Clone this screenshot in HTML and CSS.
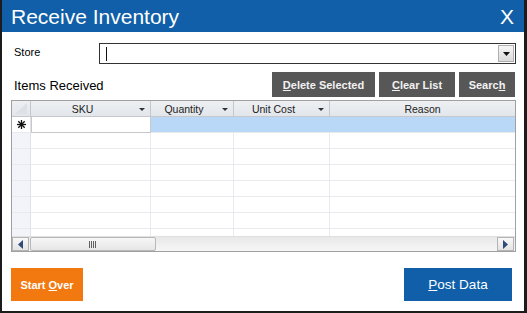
FILE: index.html
```html
<!DOCTYPE html>
<html lang="en">
<head>
    <meta charset="UTF-8">
    <title>Receive Inventory</title>
    <link rel="stylesheet" href="styles.css">
</head>
<body>
    <div class="window">
        <div class="titlebar">
            <span class="title">Receive Inventory</span>
            <span class="close">X</span>
        </div>

        <div class="content">
            <div class="store-row">
                <label class="store-label">Store</label>
                <div class="combo">
                    <span class="caret"></span>
                    <span class="drop-btn">
                        <svg width="7" height="4" viewBox="0 0 7 4"><polygon points="0,0 7,0 3.5,4" fill="#111"/></svg>
                    </span>
                </div>
            </div>

            <div class="toolbar">
                <span class="section-label">Items Received</span>
                <div class="actions">
                    <button class="btn-dark btn-delete"><u>D</u>elete Selected</button>
                    <button class="btn-dark btn-clear"><u>C</u>lear List</button>
                    <button class="btn-dark btn-search">Searc<u>h</u></button>
                </div>
            </div>

            <div class="grid">
                <div class="grid-head">
                    <div class="cell rowhead corner">
                        <svg width="18" height="15" viewBox="0 0 18 15"><polygon points="15,2 15,13 3,13" fill="#dde0e5"/></svg>
                    </div>
                    <div class="cell col-sku"><span class="head-text">SKU</span><span class="head-arrow"></span></div>
                    <div class="cell col-qty"><span class="head-text">Quantity</span><span class="head-arrow"></span></div>
                    <div class="cell col-cost"><span class="head-text">Unit Cost</span><span class="head-arrow"></span></div>
                    <div class="cell col-reason"><span class="head-text">Reason</span></div>
                </div>

                <div class="grid-body">
                    <div class="row row-new">
                        <div class="cell rowhead">
                            <svg width="9" height="9" viewBox="0 0 9 9">
                                <g stroke="#111" stroke-width="1.3">
                                    <line x1="4.5" y1="0" x2="4.5" y2="9"/>
                                    <line x1="0" y1="4.5" x2="9" y2="4.5"/>
                                    <line x1="1.3" y1="1.3" x2="7.7" y2="7.7"/>
                                    <line x1="7.7" y1="1.3" x2="1.3" y2="7.7"/>
                                </g>
                            </svg>
                        </div>
                        <div class="cell col-sku editing"></div>
                        <div class="cell col-qty selected"></div>
                        <div class="cell col-cost selected"></div>
                        <div class="cell col-reason selected"></div>
                    </div>
                    <div class="row"><div class="cell rowhead"></div><div class="cell col-sku"></div><div class="cell col-qty"></div><div class="cell col-cost"></div><div class="cell col-reason"></div></div>
                    <div class="row"><div class="cell rowhead"></div><div class="cell col-sku"></div><div class="cell col-qty"></div><div class="cell col-cost"></div><div class="cell col-reason"></div></div>
                    <div class="row"><div class="cell rowhead"></div><div class="cell col-sku"></div><div class="cell col-qty"></div><div class="cell col-cost"></div><div class="cell col-reason"></div></div>
                    <div class="row"><div class="cell rowhead"></div><div class="cell col-sku"></div><div class="cell col-qty"></div><div class="cell col-cost"></div><div class="cell col-reason"></div></div>
                    <div class="row"><div class="cell rowhead"></div><div class="cell col-sku"></div><div class="cell col-qty"></div><div class="cell col-cost"></div><div class="cell col-reason"></div></div>
                    <div class="row"><div class="cell rowhead"></div><div class="cell col-sku"></div><div class="cell col-qty"></div><div class="cell col-cost"></div><div class="cell col-reason"></div></div>
                    <div class="row"><div class="cell rowhead"></div><div class="cell col-sku"></div><div class="cell col-qty"></div><div class="cell col-cost"></div><div class="cell col-reason"></div></div>
                </div>

                <div class="hscroll">
                    <span class="scroll-btn">
                        <svg width="5" height="9" viewBox="0 0 5 9"><polygon points="5,0 5,9 0,4.5" fill="#2f4a78"/></svg>
                    </span>
                    <span class="scroll-thumb">
                        <svg width="8" height="7" viewBox="0 0 8 7">
                            <g stroke="#606060" stroke-width="1">
                                <line x1="0.5" y1="0" x2="0.5" y2="7"/>
                                <line x1="2.5" y1="0" x2="2.5" y2="7"/>
                                <line x1="4.5" y1="0" x2="4.5" y2="7"/>
                                <line x1="6.5" y1="0" x2="6.5" y2="7"/>
                            </g>
                        </svg>
                    </span>
                    <span class="scroll-track"></span>
                    <span class="scroll-btn">
                        <svg width="5" height="9" viewBox="0 0 5 9"><polygon points="0,0 0,9 5,4.5" fill="#2f4a78"/></svg>
                    </span>
                </div>
            </div>

            <div class="footer">
                <button class="btn-orange">Start <u>O</u>ver</button>
                <button class="btn-blue"><u>P</u>ost Data</button>
            </div>
        </div>
    </div>
</body>
</html>
```

FILE: styles.css
```css
body {
    margin: 0;
    padding: 0;
    font-family: "Liberation Sans", Arial, sans-serif;
    background-color: #fff;
}

.window {
    width: 527px;
    height: 313px;
    box-sizing: border-box;
    border-left: 2px solid #1c1c1c;
    border-right: 3px solid #1c1c1c;
    border-bottom: 2px solid #1c1c1c;
    background-color: #fff;
    display: flex;
    flex-direction: column;
}

.titlebar {
    height: 32px;
    background-color: #105fa8;
    color: #fff;
    display: flex;
    align-items: center;
    justify-content: space-between;
    padding: 0 10px 0 9px;
}

.title {
    font-size: 21px;
    line-height: 21px;
    padding-top: 1px;
}

.close {
    font-size: 21px;
    line-height: 21px;
    padding-top: 1px;
}

.content {
    padding: 11px 8px 0 9px;
    display: flex;
    flex-direction: column;
}

.store-row {
    display: flex;
    align-items: flex-start;
}

.store-label {
    flex: 0 0 88px;
    box-sizing: border-box;
    padding: 3px 0 0 3px;
    font-size: 11px;
    color: #000;
}

.combo {
    flex: 1;
    height: 21px;
    box-sizing: border-box;
    border: 1px solid #333;
    display: flex;
    align-items: center;
    justify-content: space-between;
    padding: 0 1px 0 6px;
}

.caret {
    width: 1px;
    height: 14px;
    background-color: #111;
}

.drop-btn {
    width: 16px;
    height: 17px;
    box-sizing: border-box;
    border: 1px solid #b0b0b0;
    background: linear-gradient(#f6f6f6, #dadada);
    display: flex;
    align-items: center;
    justify-content: center;
}

.toolbar {
    margin-top: 8px;
    display: flex;
    align-items: center;
    justify-content: space-between;
}

.section-label {
    font-size: 13px;
    padding-left: 3px;
    padding-top: 2px;
    color: #000;
}

.actions {
    display: flex;
    gap: 4px;
    padding-right: 1px;
}

button {
    font-family: "Liberation Sans", Arial, sans-serif;
    border: none;
    color: #fff;
    cursor: pointer;
    padding: 0;
}

.btn-dark {
    height: 25px;
    background-color: #575757;
    font-size: 11px;
    font-weight: bold;
    color: #f2f2f2;
}

.btn-delete {
    width: 103px;
}

.btn-clear {
    width: 76px;
}

.btn-search {
    width: 56px;
}

.grid {
    margin-top: 3px;
    height: 152px;
    box-sizing: border-box;
    border: 1px solid #a0a0a0;
    display: flex;
    flex-direction: column;
}

.grid-head {
    display: flex;
    height: 16px;
    box-sizing: border-box;
    border-bottom: 1px solid #c4c8cd;
    background: linear-gradient(#eef0f3, #e2e6ea);
}

.grid-head .cell {
    border-right: 1px solid #c4c8cd;
    display: flex;
    align-items: center;
    font-size: 10.5px;
    color: #222;
}

.cell {
    box-sizing: border-box;
    height: 100%;
    border-right: 1px solid #e8eaee;
}

.rowhead {
    width: 19px;
    flex: 0 0 19px;
}

.col-sku {
    flex: 0 0 120px;
}

.col-qty {
    flex: 0 0 83px;
}

.col-cost {
    flex: 0 0 96px;
}

.col-reason {
    flex: 1;
    border-right: none;
}

.grid-head .col-reason {
    border-right: none;
}

.corner svg {
    display: block;
}

.head-text {
    flex: 1;
    text-align: center;
}

.head-arrow {
    flex: 0 0 16px;
    height: 100%;
    display: flex;
    align-items: center;
    justify-content: center;
}

.head-arrow::before {
    content: "";
    border-left: 3px solid transparent;
    border-right: 3px solid transparent;
    border-top: 3px solid #333;
    margin-top: 2px;
}

.grid-body {
    flex: 1;
    overflow: hidden;
}

.row {
    display: flex;
    height: 16px;
    box-sizing: border-box;
    border-bottom: 1px solid #e8eaee;
}

.row .rowhead {
    background-color: #f3f4fa;
    border-right: 1px solid #dfe2ea;
}

.row-new .rowhead {
    display: flex;
    align-items: center;
    justify-content: center;
    background-color: #fff;
}

.editing {
    background-color: #fff;
    border: 1px solid #c8c8c8;
    height: 17px;
    margin-top: -1px;
}

.selected {
    background-color: #b9d8f8;
    border-right-color: #b9d8f8;
}

.hscroll {
    height: 15px;
    display: flex;
    background: linear-gradient(#e8e8e8, #f6f6f6);
    border-top: 1px solid #e0e0e0;
    box-sizing: border-box;
}

.scroll-btn {
    width: 17px;
    box-sizing: border-box;
    border: 1px solid #b4b4b4;
    background: linear-gradient(#f8f8f8, #e4e4e4);
    display: flex;
    align-items: center;
    justify-content: center;
}

.scroll-btn:last-child {
    margin-right: 1px;
}

.scroll-thumb {
    width: 126px;
    margin-left: 1px;
    box-sizing: border-box;
    border: 1px solid #b8b8b8;
    border-radius: 2px;
    background: linear-gradient(#f6f6f6, #e6e6e6);
    display: flex;
    align-items: center;
    justify-content: center;
}

.scroll-track {
    flex: 1;
}

.footer {
    margin-top: 16px;
    display: flex;
    justify-content: space-between;
    padding-right: 4px;
}

.btn-orange {
    width: 72px;
    height: 33px;
    background-color: #f27810;
    font-size: 11px;
    font-weight: bold;
}

.btn-blue {
    width: 108px;
    height: 33px;
    background-color: #105fa8;
    font-size: 13.5px;
}
```
